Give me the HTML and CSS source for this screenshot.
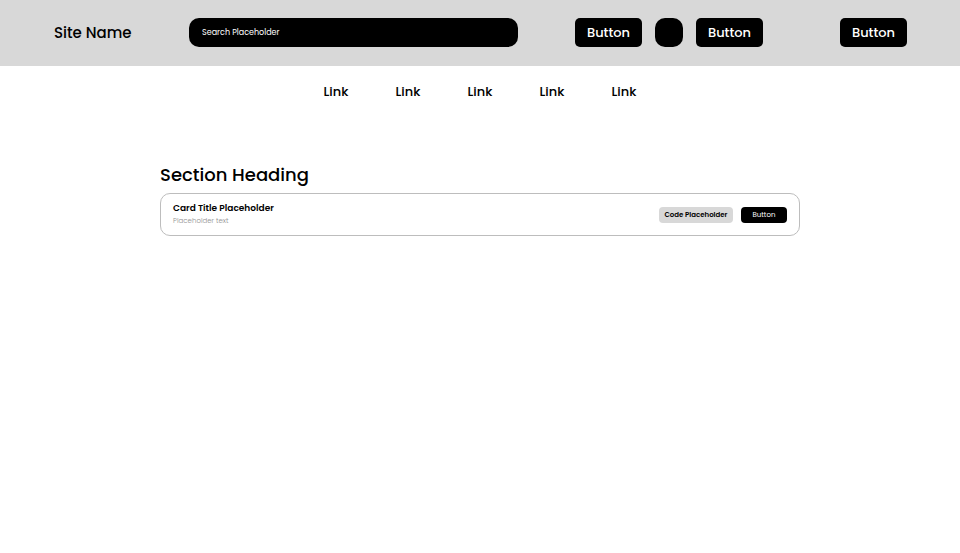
FILE: index.html
```html
<!DOCTYPE html>
<html lang="en">
<head>
<meta charset="utf-8">
<meta name="viewport" content="width=device-width, initial-scale=1">
<title>Site Name</title>
<link rel="stylesheet" href="styles.css">
</head>
<body>
<header class="header">
  <a class="brand" href="#">Site Name</a>
  <input class="search" type="search" placeholder="Search Placeholder" aria-label="Search">
  <div class="actions">
    <button class="button" type="button">Button</button>
    <button class="icon-button" type="button" aria-label="Profile"></button>
    <button class="button" type="button">Button</button>
  </div>
  <button class="button" type="button">Button</button>
</header>
<nav class="nav">
  <a href="#">Link</a>
  <a href="#">Link</a>
  <a href="#">Link</a>
  <a href="#">Link</a>
  <a href="#">Link</a>
</nav>
<main class="content">
  <h1 class="heading">Section Heading</h1>
  <article class="card">
    <div class="card-text">
      <h2 class="card-title">Card Title Placeholder</h2>
      <p class="card-note">Placeholder text</p>
    </div>
    <span class="code">Code Placeholder</span>
    <button class="card-button" type="button">Button</button>
  </article>
</main>
</body>
</html>
```
FILE: styles.css
```css
* {
  box-sizing: border-box;
}

body {
  margin: 0;
  background: #fff;
  color: #000;
  font-family: Poppins, Inter, sans-serif;
}

a {
  color: inherit;
  text-decoration: none;
}

button,
input {
  margin: 0;
  border: 0;
  background: #000;
  color: #fff;
  font-family: inherit;
}

h1,
h2,
p {
  margin: 0;
}

.header {
  display: flex;
  align-items: center;
  padding: 18px 53px 19px 54px;
  background: #d8d8d8;
}

.brand {
  flex: 0 0 135px;
  font-size: 15px;
  line-height: 24px;
  font-weight: 500;
}

.search {
  flex: 1;
  min-width: 0;
  height: 29px;
  padding: 0 13px;
  border-radius: 10px;
  font-size: 8px;
  appearance: none;
}

.search::placeholder {
  color: #fff;
  opacity: 1;
}

.actions {
  display: flex;
  align-items: center;
  gap: 13px;
  margin: 0 77px 0 57px;
}

.button {
  width: 67px;
  height: 29px;
  padding: 0;
  border-radius: 5px;
  font-size: 13px;
  font-weight: 500;
}

.icon-button {
  width: 28px;
  height: 29px;
  padding: 0;
  border-radius: 10px;
}

.nav {
  display: flex;
  justify-content: center;
  gap: 48px;
  padding: 16px;
  font-size: 13px;
  line-height: 20px;
  font-weight: 500;
}

.nav a {
  width: 24px;
  display: flex;
  justify-content: center;
}

.content {
  width: 66.66%;
  margin: 42px auto 0;
}

.heading {
  font-size: 18px;
  line-height: 29px;
  font-weight: 500;
}

.card {
  display: flex;
  align-items: center;
  gap: 8px;
  margin-top: 4px;
  padding: 8px 12px;
  border: 1px solid #bdbdbd;
  border-radius: 10px;
}

.card-text {
  flex: 1;
}

.card-title {
  font-size: 9px;
  line-height: 13px;
  font-weight: 600;
}

.card-note {
  color: #909090;
  font-size: 7px;
  line-height: 12px;
  font-weight: 300;
}

.code,
.card-button {
  height: 16px;
  border-radius: 4px;
  text-align: center;
}

.code {
  width: 74px;
  background: #d8d8d8;
  font-size: 7px;
  line-height: 16px;
  font-weight: 600;
}

.card-button {
  width: 46px;
  padding: 0;
  font-size: 7px;
}
```
